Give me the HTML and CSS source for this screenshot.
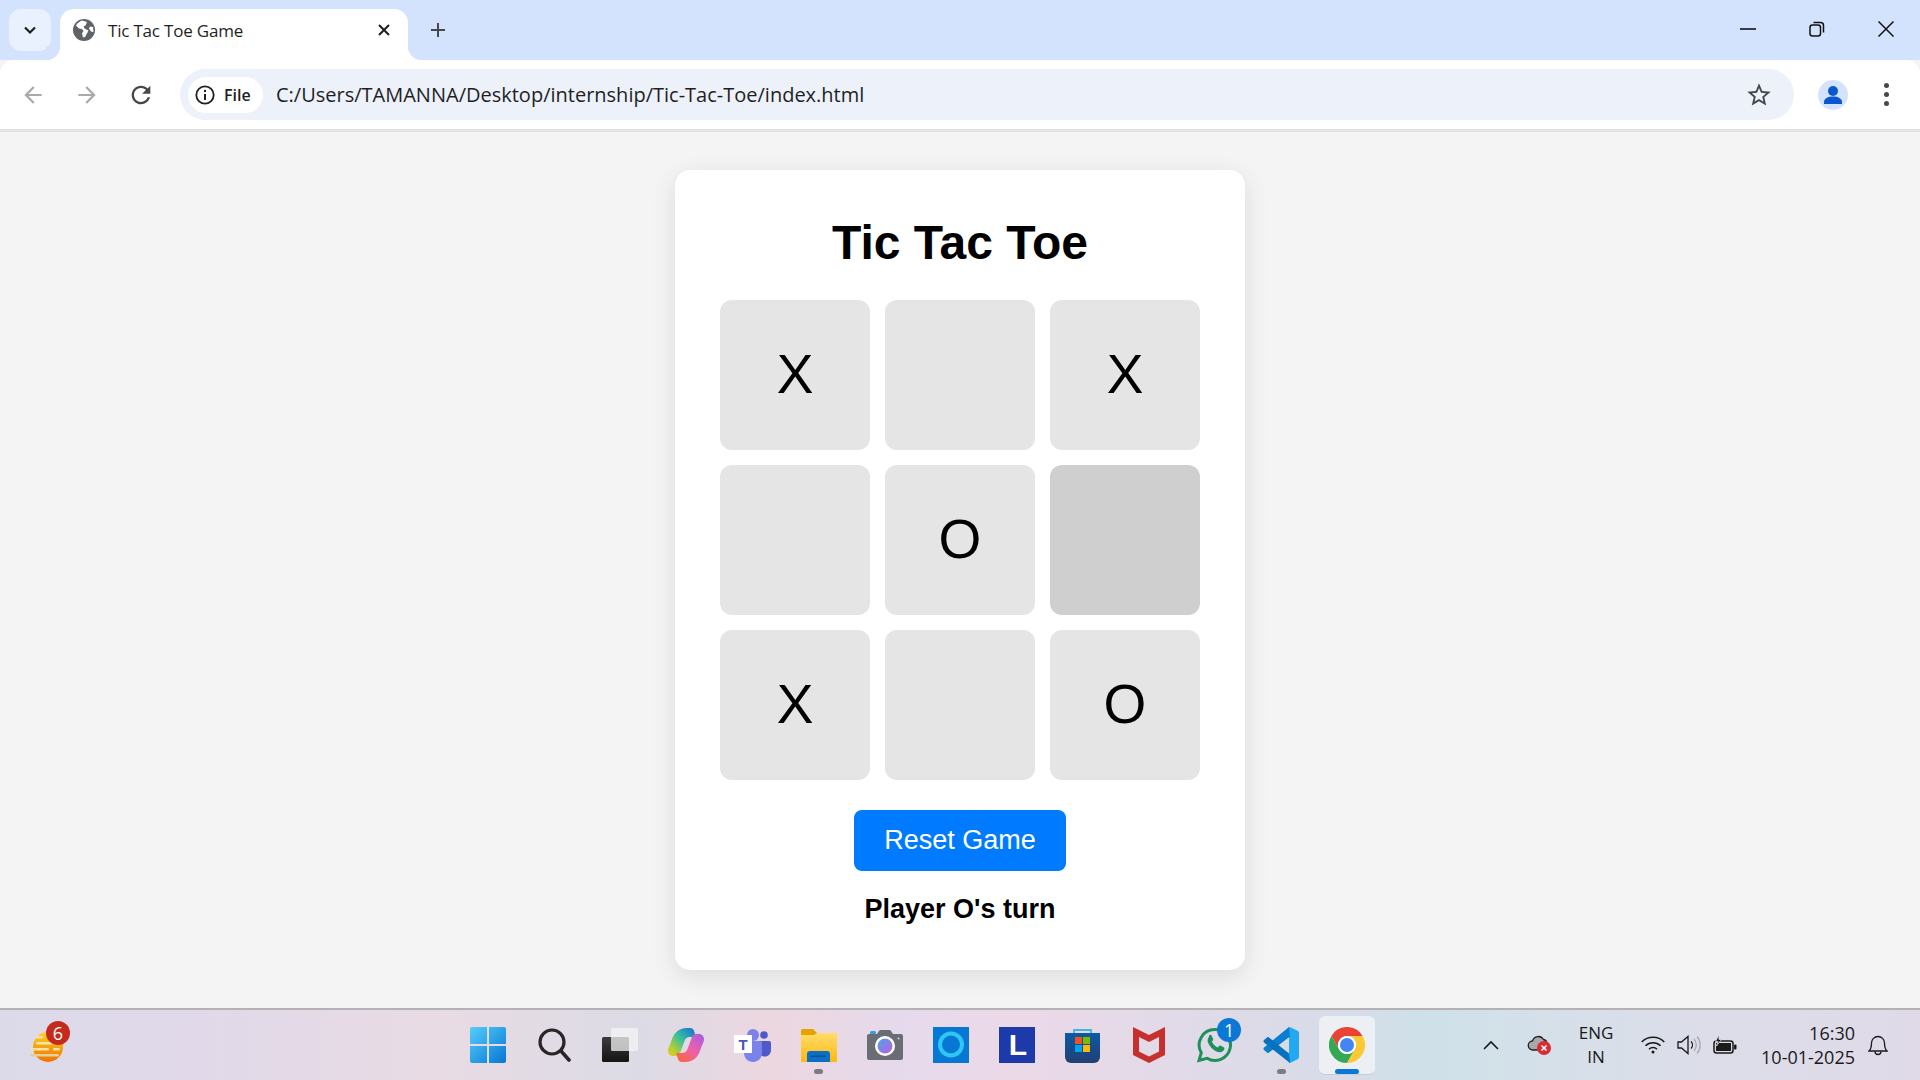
FILE: index.html
```html
<!DOCTYPE html>
<html lang="en">
<head>
    <meta charset="UTF-8">
    <meta name="viewport" content="width=device-width, initial-scale=1.0">
    <title>Tic Tac Toe Game</title>
    <link rel="stylesheet" href="styles.css">
</head>
<body>
    <!-- browser tab strip -->
    <div class="tabstrip">
        <div class="tab-search">
            <svg width="16" height="16" viewBox="0 0 16 16"><path d="M3 5.5l5 5 5-5" fill="none" stroke="#1f1f1f" stroke-width="2.2"/></svg>
        </div>
        <div class="tab">
            <svg class="tab-globe" width="22" height="22" viewBox="0 0 22 22"><circle cx="11" cy="11" r="11" fill="#5f6368"/><path d="M9 1.5c-2 1-5 2.5-6 5l3 3 3 .5 1.500 2-1.500 2.500 1 4 2-.5 2.500-4.500 1-2-4-2-1-2 2-1 1.500-3.500zM20 8l-3-.5-1 2 2 3 2.500.5z" fill="#fff"/></svg>
            <span class="tab-title">Tic Tac Toe Game</span>
            <svg class="tab-close" width="14" height="14" viewBox="0 0 14 14"><path d="M2 2l10 10M12 2L2 12" stroke="#1f1f1f" stroke-width="2"/></svg>
        </div>
        <svg class="new-tab" width="18" height="18" viewBox="0 0 18 18"><path d="M9 2v14M2 9h14" stroke="#474747" stroke-width="2"/></svg>
        <div class="win-controls">
            <div class="win-btn"><svg width="16" height="16" viewBox="0 0 16 16"><path d="M0 8h16" stroke="#111" stroke-width="1.600"/></svg></div>
            <div class="win-btn"><svg width="16" height="16" viewBox="0 0 16 16"><rect x="1" y="4" width="10.500" height="11" rx="2.500" fill="none" stroke="#111" stroke-width="1.500"/><path d="M4.500 1.500h7a3 3 0 0 1 3 3v7" fill="none" stroke="#111" stroke-width="1.500"/></svg></div>
            <div class="win-btn"><svg width="16" height="16" viewBox="0 0 16 16"><path d="M.5.500l15 15M15.500.500l-15 15" stroke="#111" stroke-width="1.500"/></svg></div>
        </div>
    </div>

    <!-- address bar row -->
    <div class="toolbar">
        <div class="tool-btn"><svg width="26" height="26" viewBox="0 0 24 24"><path fill="#a9a9a9" d="M20 11H7.830l5.590-5.590L12 4l-8 8 8 8 1.410-1.410L7.830 13H20v-2z"/></svg></div>
        <div class="tool-btn"><svg width="26" height="26" viewBox="0 0 24 24"><path fill="#a9a9a9" d="M4 11h12.170l-5.590-5.590L12 4l8 8-8 8-1.410-1.410L16.170 13H4v-2z"/></svg></div>
        <div class="tool-btn"><svg width="28" height="28" viewBox="0 0 24 24"><path fill="#474747" d="M17.650 6.350C16.200 4.900 14.210 4 12 4c-4.420 0-7.990 3.580-7.990 8s3.570 8 7.990 8c3.730 0 6.840-2.550 7.730-6h-2.080c-.82 2.330-3.040 4-5.650 4-3.310 0-6-2.690-6-6s2.690-6 6-6c1.660 0 3.140.69 4.220 1.780L13 11h7V4l-2.350 2.350z"/></svg></div>
        <div class="omnibox">
            <div class="chip">
                <svg width="20" height="20" viewBox="0 0 20 20"><circle cx="10" cy="10" r="8.700" fill="none" stroke="#1f1f1f" stroke-width="1.800"/><path d="M10 9v6" stroke="#1f1f1f" stroke-width="2"/><circle cx="10" cy="6" r="1.200" fill="#1f1f1f"/></svg>
                <span>File</span>
            </div>
            <span class="url">C:/Users/TAMANNA/Desktop/internship/Tic-Tac-Toe/index.html</span>
            <svg class="star" width="28" height="28" viewBox="0 0 24 24"><path fill="#474747" d="M22 9.240l-7.190-.62L12 2 9.190 8.630 2 9.240l5.460 4.730L5.820 21 12 17.270 18.180 21l-1.630-7.030L22 9.240zM12 15.400l-3.760 2.270 1-4.280-3.320-2.880 4.380-.38L12 6.100l1.710 4.040 4.380.38-3.320 2.880 1 4.280L12 15.400z"/></svg>
        </div>
        <div class="avatar">
            <svg width="30" height="30" viewBox="0 0 30 30"><circle cx="15" cy="15" r="15" fill="#d3e3fd"/><circle cx="15" cy="11" r="5" fill="#0b57d0"/><path d="M6 24v-2c0-3.500 4-5.500 9-5.500s9 2 9 5.500v2z" fill="#0b57d0"/></svg>
        </div>
        <div class="menu-dots"><i></i><i></i><i></i></div>
    </div>

    <!-- the game page -->
    <main class="page">
        <div class="container">
            <h1>Tic Tac Toe</h1>
            <div class="board">
                <div class="cell">X</div>
                <div class="cell"></div>
                <div class="cell">X</div>
                <div class="cell"></div>
                <div class="cell">O</div>
                <div class="cell hover"></div>
                <div class="cell">X</div>
                <div class="cell"></div>
                <div class="cell">O</div>
            </div>
            <button class="reset">Reset Game</button>
            <p class="status">Player O's turn</p>
        </div>
    </main>

    <!-- windows taskbar -->
    <footer class="taskbar">
        <div class="tb-left">
            <div class="weather">
                <svg width="33" height="32" viewBox="0 0 33 32">
                    <defs><linearGradient id="sun" x1="0" y1="0" x2="0" y2="1"><stop offset="0" stop-color="#ffd21f"/><stop offset="1" stop-color="#ee7300"/></linearGradient></defs>
                    <circle cx="18" cy="16" r="15" fill="url(#sun)"/>
                    <g fill="#f6e3a8"><rect x="6" y="5" width="7" height="2.500" rx="1.200"/><rect x="6" y="11" width="20" height="2.500" rx="1.200"/><rect x="0" y="17" width="19" height="2.500" rx="1.200"/><rect x="23" y="17" width="7" height="2.500" rx="1.200"/></g>
                    <rect x="0" y="23" width="29" height="2.500" rx="1.200" fill="#e6cf9a"/>
                </svg>
                <span class="badge badge-red">6</span>
            </div>
        </div>
        <div class="tb-apps">
            <div class="app"><svg width="36" height="36" viewBox="0 0 36 36">
                <defs><linearGradient id="win" x1="0" y1="0" x2="1" y2="1"><stop offset="0" stop-color="#56cdfb"/><stop offset="1" stop-color="#0677d4"/></linearGradient></defs>
                <path fill="url(#win)" d="M2 0h15v17H0V2a2 2 0 0 1 2-2zM19 0h15a2 2 0 0 1 2 2v15H19zM0 19h17v17H2a2 2 0 0 1-2-2zM19 19h17v15a2 2 0 0 1-2 2H19z"/>
            </svg></div>
            <div class="app"><svg width="33" height="34" viewBox="0 0 33 34"><circle cx="14" cy="14" r="12" fill="none" stroke="#262626" stroke-width="3.200"/><path d="M23 23l8 9" stroke="#262626" stroke-width="3.600" stroke-linecap="round"/></svg></div>
            <div class="app"><svg width="36" height="34" viewBox="0 0 36 34">
                <defs><linearGradient id="tv" x1="0" y1="0" x2="0" y2="1"><stop offset="0" stop-color="#3c3c3c"/><stop offset="1" stop-color="#141414"/></linearGradient></defs>
                <rect x="0" y="9" width="27" height="25" rx="1.500" fill="url(#tv)"/>
                <rect x="9" y="0" width="27" height="23" rx="1.500" fill="#f4f4f4" opacity=".75"/>
            </svg></div>
            <div class="app"><svg width="36" height="34" viewBox="0 0 36 34">
                <defs>
                    <linearGradient id="cp1" x1="1" y1="0" x2="0" y2="1"><stop offset="0" stop-color="#1667d9"/><stop offset=".45" stop-color="#36bfa0"/><stop offset=".8" stop-color="#b8d02f"/><stop offset="1" stop-color="#f0c52b"/></linearGradient>
                    <linearGradient id="cp2" x1="1" y1="0" x2="0" y2="1"><stop offset="0" stop-color="#a25ce6"/><stop offset=".5" stop-color="#f060a8"/><stop offset="1" stop-color="#f8682c"/></linearGradient>
                </defs>
                <path fill="url(#cp1)" d="M19 0h3c2 0 3.500 1 4 3l2 6h-6c-3 0-4.500 1.500-5.500 4L12 25c-.8 2-2.500 3-4.500 3H5c-3 0-5-2.500-5-5 0-1 .2-2 .5-3L3 14C5 7 9 0 19 0z"/>
                <path fill="url(#cp2)" d="M17 34h-3c-2 0-3.500-1-4-3l-2-6h6c3 0 4.500-1.500 5.500-4L24 9c.8-2 2.500-3 4.500-3H31c3 0 5 2.500 5 5 0 1-.2 2-.5 3L33 20c-2 7-6 14-16 14z"/>
            </svg></div>
            <div class="app"><svg width="37" height="34" viewBox="0 0 37 34">
                <circle cx="30" cy="7" r="3.800" fill="#5059c9"/>
                <path fill="#5059c9" d="M25 13h10a2 2 0 0 1 2 2v7c0 4-3 6.500-6 6.500s-6-1.500-6-6z"/>
                <circle cx="19" cy="7" r="6" fill="#7b83eb"/>
                <path fill="#7b83eb" d="M10 13h16a2 2 0 0 1 2 2v10c0 5-4 9-9 9s-9-4-9-9z"/>
                <rect x="0" y="7" width="18" height="18" fill="#fff"/>
                <text x="9" y="21.500" class="teams-t">T</text>
            </svg></div>
            <div class="app"><svg width="36" height="33" viewBox="0 0 36 33">
                <defs><linearGradient id="fold" x1="0" y1="0" x2="0" y2="1"><stop offset="0" stop-color="#ffdc6a"/><stop offset="1" stop-color="#fdb912"/></linearGradient></defs>
                <path fill="#e3a400" d="M0 1.500A1.500 1.500 0 0 1 1.500 0H12l4 4h20v6H0z"/>
                <path fill="url(#fold)" d="M0 6h13l3-2h20v29H0z"/>
                <path fill="#0c6fc6" d="M6 33V25a3 3 0 0 1 3-3h17a3 3 0 0 1 3 3v8z"/>
                <rect x="10" y="26.500" width="15" height="1.500" fill="#0a4f94"/>
            </svg><i class="dot"></i></div>
            <div class="app"><svg width="36" height="30" viewBox="0 0 36 30">
                <defs><linearGradient id="lens" x1="0" y1="0" x2="1" y2="1"><stop offset="0" stop-color="#4aa4f2"/><stop offset="1" stop-color="#c05fd8"/></linearGradient></defs>
                <rect x="3" y="1" width="6" height="5" rx="1.500" fill="#2f9fe0"/>
                <path fill="#6a6e74" d="M2 4h8l2-3a2 2 0 0 1 1.500-1h9a2 2 0 0 1 1.500 1l2 3h8a2 2 0 0 1 2 2v22a2 2 0 0 1-2 2H2a2 2 0 0 1-2-2V6a2 2 0 0 1 2-2z"/>
                <circle cx="18" cy="16" r="10" fill="#fff"/>
                <circle cx="18" cy="16" r="7.500" fill="url(#lens)"/>
                <circle cx="31.500" cy="8.500" r="1" fill="#cfd2d6"/>
            </svg></div>
            <div class="app"><svg width="36" height="36" viewBox="0 0 36 36"><rect width="36" height="36" fill="#0678d4"/><circle cx="18" cy="17.500" r="11" fill="none" stroke="#2fc6f6" stroke-width="4"/><path d="M15 26l3 4 1-3z" fill="#2fc6f6"/></svg></div>
            <div class="app"><div class="l-tile">L</div></div>
            <div class="app"><svg width="35" height="35" viewBox="0 0 35 35">
                <defs><linearGradient id="bag" x1="0" y1="0" x2="0" y2="1"><stop offset="0" stop-color="#0b5aa8"/><stop offset="1" stop-color="#213f72"/></linearGradient></defs>
                <path d="M9 8V2h17v6" fill="none" stroke="#36b8ea" stroke-width="1.800"/>
                <path fill="url(#bag)" d="M0 5h35v24a6 6 0 0 1-6 6H6a6 6 0 0 1-6-6z"/>
                <rect x="10" y="9" width="7" height="7" fill="#f25022"/><rect x="18" y="9" width="7" height="7" fill="#7fba00"/>
                <rect x="10" y="17" width="7" height="7" fill="#00a4ef"/><rect x="18" y="17" width="7" height="7" fill="#ffb900"/>
            </svg></div>
            <div class="app"><svg width="32" height="36" viewBox="0 0 32 36"><path fill="#c6302d" fill-rule="evenodd" d="M0 0l16 8 16-8v28l-16 8-16-8zM6 10v14.500l10 5 10-5V10l-10 5z"/></svg></div>
            <div class="app"><svg width="36" height="36" viewBox="0 0 36 36">
                <path d="M18 2.500a15.500 15.500 0 1 1-8 28.800L2 33.500l2.300-7.700A15.500 15.500 0 0 1 18 2.500z" fill="none" stroke="#1f8f5b" stroke-width="3"/>
                <path fill="#1f8f5b" d="M12 10c-1 1-2 2.500-1 5.500 1.500 4 6 8.500 10 9.500 3 .8 5-.5 6-2 .5-1 .5-2 0-2.500l-3.500-2c-.7-.3-1.200 0-1.700.7l-1 1.200c-2.500-1-5-3.500-6-6l1-1c.5-.6.6-1 .3-1.600l-1.700-3.600c-.5-.8-1.500-.7-2.400.3z"/>
            </svg><span class="badge badge-blue">1</span></div>
            <div class="app"><svg width="36" height="36" viewBox="0 0 36 36">
                <path fill="#23a9f2" d="M26 0q1 0 2 .5l7 3.500q1 1 1 2v24q0 1-1 2l-7 3.500q-1 .5-2 .5z"/>
                <path fill="#0a7fd0" d="M26 0l1 9.500-21 16q-1 1-2 0l-3-2.500q-1-1 0-2.500z"/>
                <path fill="#0672bd" d="M27 36l-1-9.500-20-16q-1-1-2 0l-3 2.500q-1 1 0 2.500z"/>
            </svg><i class="dot"></i></div>
            <div class="app app-active"><svg width="36" height="36" viewBox="0 0 36 36">
                <path fill="#ea4335" d="M33.600 9A18 18 0 0 0 2.400 9l7.800 13.500A9 9 0 0 1 18 9z"/>
                <path fill="#34a853" d="M2.400 9A18 18 0 0 0 18 36l7.800-13.500a9 9 0 0 1-15.600 0z"/>
                <path fill="#fcc934" d="M18 36A18 18 0 0 0 33.600 9H18a9 9 0 0 1 7.800 13.500z"/>
                <circle cx="18" cy="18" r="9" fill="#fff"/><circle cx="18" cy="18" r="7" fill="#4285f4"/>
            </svg><i class="dot dot-active"></i></div>
        </div>
        <div class="tray">
            <svg class="tr-chev" width="16" height="10" viewBox="0 0 16 10"><path d="M1 9l7-7 7 7" fill="none" stroke="#1a1a1a" stroke-width="1.600"/></svg>
            <svg class="tr-cloud" width="24" height="20" viewBox="0 0 24 20"><path d="M6 15a4.500 4.500 0 0 1-.5-9 6 6 0 0 1 11-1.500A4.500 4.500 0 0 1 20 8v2H14v5z" fill="#a9a9ac" stroke="#222" stroke-width="1.300"/><circle cx="17" cy="13" r="7" fill="#d92b35"/><path d="M14.500 10.500l5 5M19.500 10.500l-5 5" stroke="#fff" stroke-width="1.600"/></svg>
            <div class="lang">ENG<br>IN</div>
            <svg class="tr-wifi" width="24" height="18" viewBox="0 0 24 18" fill="none" stroke="#1a1a1a" stroke-width="1.500"><path d="M.7 6a16 16 0 0 1 22.600 0M4.500 9.800a10.600 10.600 0 0 1 15 0M8 13.300a5.600 5.600 0 0 1 8 0"/><circle cx="12" cy="16" r="1.500" fill="#1a1a1a" stroke="none"/></svg>
            <svg class="tr-vol" width="24" height="20" viewBox="0 0 24 20" fill="none" stroke="#1a1a1a" stroke-width="1.300"><path d="M1 7h3.500L11 1.500v17L4.500 13H1z"/><path d="M14 6.500a5 5 0 0 1 0 7"/><path d="M17 4a9 9 0 0 1 0 12M20 1.500a13 13 0 0 1 0 17" stroke="#a8a8ae"/></svg>
            <svg class="tr-batt" width="24" height="20" viewBox="0 0 24 20"><rect x="1" y="6" width="19" height="12" rx="2.500" fill="none" stroke="#1a1a1a" stroke-width="1.500"/><rect x="3" y="8" width="15" height="8" fill="#1a1a1a"/><rect x="21" y="9.500" width="2.500" height="5" rx="1" fill="#1a1a1a"/><path d="M6 0L2.500 6.500H5L3.500 11 8.500 4.500H6z" fill="#1a1a1a" stroke="#e0dde9" stroke-width=".8"/></svg>
            <div class="clock">16:30<br>10-01-2025</div>
            <svg class="tr-bell" width="20" height="22" viewBox="0 0 20 22" fill="none" stroke="#1a1a1a" stroke-width="1.300"><path d="M1 17c2-2 2.500-4 2.500-8a6.500 6.500 0 0 1 13 0c0 4 .5 6 2.500 8z"/><path d="M7 17.500a3 3 0 0 0 6 0"/></svg>
        </div>
    </footer>
</body>
</html>
```

FILE: styles.css
```css
* {
    box-sizing: border-box;
}
html, body {
    height: 100%;
}
body {
    margin: 0;
    display: flex;
    flex-direction: column;
    overflow: hidden;
    font-family: "Liberation Sans", Arial, sans-serif;
    background-color: #f4f4f4;
}

/* tab strip */
.tabstrip {
    height: 60px;
    flex-shrink: 0;
    display: flex;
    align-items: flex-start;
    background-color: #d3e3fd;
}
.tab-search {
    width: 42px;
    height: 42px;
    margin: 9px 9px 0;
    display: flex;
    align-items: center;
    justify-content: center;
    border-radius: 12px;
    background-color: #e9f0fe;
}
.tab {
    position: relative;
    width: 348px;
    height: 51px;
    margin-top: 9px;
    padding: 0 17px 9px 13px;
    display: flex;
    align-items: center;
    border-radius: 14px 14px 0 0;
    background-color: #fff;
}
.tab::before, .tab::after {
    content: "";
    position: absolute;
    bottom: 0;
    width: 14px;
    height: 14px;
}
.tab::before {
    left: -14px;
    background: radial-gradient(circle at 0 0, #d3e3fd 14px, #fff 14.500px);
}
.tab::after {
    right: -14px;
    background: radial-gradient(circle at 100% 0, #d3e3fd 14px, #fff 14.500px);
}
.tab-title {
    flex: 1;
    margin-left: 13px;
    font-family: "Open Sans", sans-serif;
    font-size: 17px;
    letter-spacing: -0.2px;
    color: #1f1f1f;
}
.new-tab {
    margin: 21px 0 0 21px;
}
.win-controls {
    margin-left: auto;
    display: flex;
}
.win-btn {
    width: 69px;
    height: 58px;
    display: flex;
    align-items: center;
    justify-content: center;
}

/* toolbar */
.toolbar {
    height: 72px;
    flex-shrink: 0;
    padding: 0 15px;
    display: flex;
    align-items: center;
    gap: 18px;
    border-bottom: 3px solid #e3e3e3;
    border-radius: 14px 14px 0 0;
    background-color: #fff;
}
.tool-btn {
    width: 36px;
    height: 36px;
    display: flex;
    align-items: center;
    justify-content: center;
}
.omnibox {
    width: 1614px;
    height: 51px;
    margin-left: 3px;
    padding: 0 21px 0 8px;
    display: flex;
    align-items: center;
    border-radius: 26px;
    background-color: #ecf1fa;
}
.chip {
    width: 75px;
    height: 36px;
    padding-left: 7px;
    display: flex;
    align-items: center;
    gap: 9px;
    border-radius: 18px;
    background-color: #fff;
    font-family: "Open Sans", sans-serif;
    font-size: 16px;
    font-weight: 600;
    color: #1f1f1f;
}
.url {
    flex: 1;
    margin-left: 13px;
    font-family: "Open Sans", sans-serif;
    font-size: 20px;
    color: #1f1f1f;
}
.avatar {
    width: 30px;
    height: 30px;
    margin-left: 6px;
}
.menu-dots {
    width: 6px;
    margin-left: 18px;
    display: flex;
    flex-direction: column;
    gap: 4px;
}
.menu-dots i {
    width: 5px;
    height: 5px;
    border-radius: 50%;
    background-color: #474747;
}

/* game */
.page {
    flex: 1;
    display: flex;
    align-items: center;
    justify-content: center;
}
.container {
    width: 570px;
    height: 800px;
    padding: 45px;
    text-align: center;
    border-radius: 15px;
    background-color: #fff;
    box-shadow: 0 6px 24px rgba(0, 0, 0, 0.1);
}
h1 {
    margin: 0 0 30px;
    font-size: 48px;
    line-height: 55px;
    font-weight: bold;
    color: #000;
}
.board {
    display: grid;
    grid-template-columns: repeat(3, 150px);
    grid-auto-rows: 150px;
    gap: 15px;
}
.cell {
    padding-bottom: 2px;
    display: flex;
    align-items: center;
    justify-content: center;
    border-radius: 12px;
    font-size: 55px;
    background-color: #e5e5e5;
    color: #000;
}
.cell.hover {
    background-color: #cfcfcf;
}
.reset {
    width: 212px;
    height: 61px;
    margin-top: 30px;
    padding-bottom: 2px;
    border: none;
    border-radius: 8px;
    background-color: #007bff;
    color: #fff;
    font-family: "Liberation Sans", Arial, sans-serif;
    font-size: 27px;
}
.status {
    margin: 23px 0 0;
    font-size: 27px;
    line-height: 30px;
    font-weight: bold;
    color: #000;
}

/* taskbar */
.taskbar {
    height: 72px;
    flex-shrink: 0;
    display: flex;
    align-items: center;
    border-top: 2px solid #b4b1b4;
    background: linear-gradient(90deg, #dcdae9 0, #e1d9e9 200px, #e8dbe4 440px, #dcdbe5 640px, #ecd7e0 770px, #e5daec 900px, #ecd9e8 1010px, #dadbe8 1300px, #cfe0e8 1420px, #d2e1e9 1480px, #dcdde9 1700px, #e0dae8 1920px);
}
.tb-left {
    width: 455px;
    padding-left: 30px;
}
.weather {
    position: relative;
    width: 33px;
    height: 32px;
    margin-top: 4px;
}
.weather svg {
    display: block;
}
.badge {
    position: absolute;
    width: 24px;
    height: 24px;
    display: flex;
    align-items: center;
    justify-content: center;
    border-radius: 50%;
    font-family: "Open Sans", sans-serif;
    font-size: 18px;
    color: #fff;
}
.badge-red {
    top: -10px;
    left: 16px;
    background-color: #c42b1c;
}
.badge-blue {
    top: 8px;
    left: 35px;
    background-color: #0a78d4;
}
.tb-apps {
    display: flex;
}
.app {
    position: relative;
    width: 66.1px;
    height: 70px;
    display: flex;
    align-items: center;
    justify-content: center;
}
.app-active::before {
    content: "";
    position: absolute;
    top: 6px;
    bottom: 5px;
    left: 5px;
    right: 5px;
    border-radius: 6px;
    border-bottom: 1px solid #c8ccd4;
    background-color: rgba(255, 255, 255, 0.55);
}
.app svg {
    position: relative;
}
.dot {
    position: absolute;
    left: 29px;
    bottom: 6px;
    width: 9px;
    height: 5px;
    border-radius: 3px;
    background-color: #7b7b80;
}
.dot-active {
    left: 21px;
    width: 24px;
    background-color: #0a78d4;
}
.l-tile {
    width: 36px;
    height: 36px;
    padding-left: 10px;
    font-size: 30px;
    font-weight: bold;
    line-height: 36px;
    background-color: #1c3aa9;
    color: #fff;
}
.teams-t {
    font-family: "Liberation Sans", Arial, sans-serif;
    font-size: 15px;
    font-weight: bold;
    fill: #4b53bc;
    text-anchor: middle;
}
.tray {
    margin-left: auto;
    padding-right: 32px;
    display: flex;
    align-items: center;
    font-family: "Open Sans", sans-serif;
    color: #1a1a1a;
}
.tr-cloud {
    margin-left: 28px;
}
.lang {
    width: 40px;
    margin-left: 25px;
    font-size: 17px;
    line-height: 24px;
    text-align: center;
}
.tr-wifi {
    margin-left: 25px;
}
.tr-vol, .tr-batt {
    margin-left: 12px;
}
.clock {
    width: 94px;
    margin-left: 24px;
    font-size: 18px;
    line-height: 24px;
    white-space: nowrap;
    text-align: right;
}
.tr-bell {
    margin-left: 13px;
}
```
